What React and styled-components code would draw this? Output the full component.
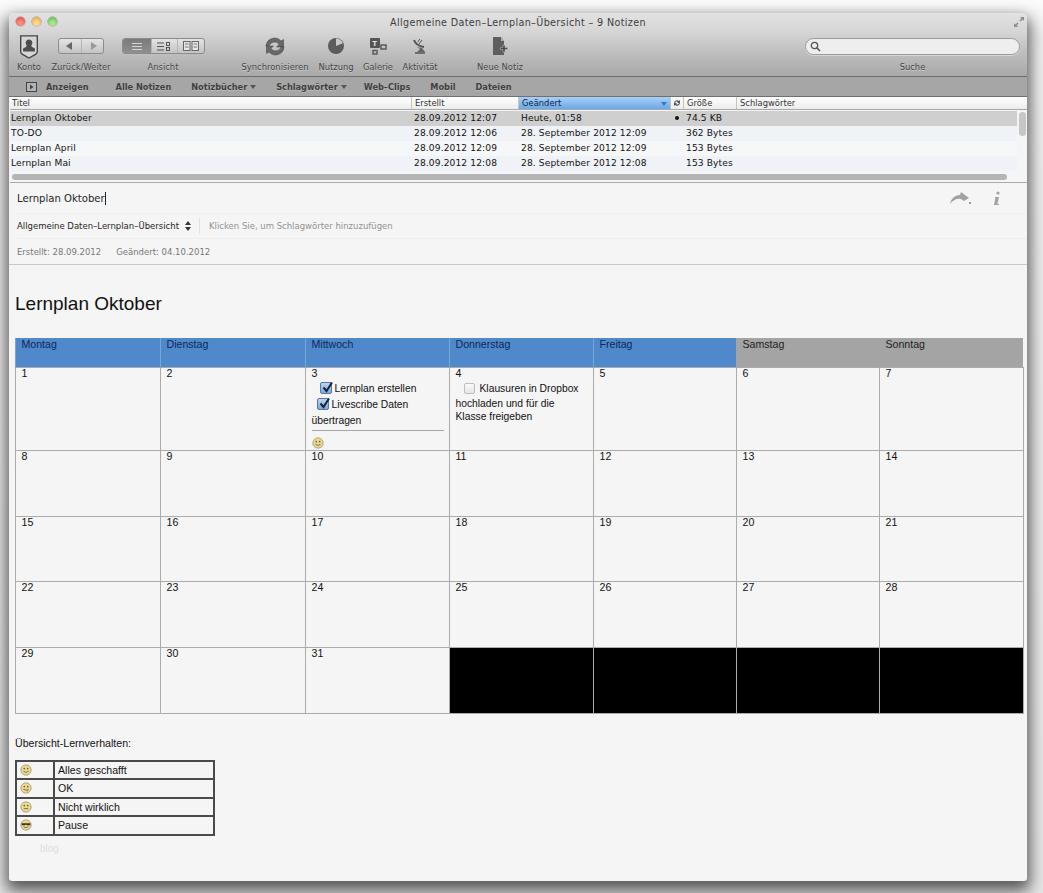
import React from "react";
import styled, { createGlobalStyle } from "styled-components";

const Global = createGlobalStyle`
  html, body { margin: 0; padding: 0; background: #f4f4f4; }
  body { font-family: "DejaVu Sans", sans-serif; overflow: hidden; }
  * { box-sizing: border-box; }
`;

const Page = styled.div`
  width: 1043px;
  height: 893px;
  padding: 13px 16px 12px 9px;
  background: linear-gradient(#fbfbfb 0, #eeeeee 40px, #e6e6e6 100%);
`;
const Win = styled.div`
  width: 1018px;
  height: 868px;
  background: #f5f5f5;
  border-radius: 5px 5px 3px 3px;
  box-shadow: 0 7px 15px 3px rgba(0, 0, 0, 0.62);
  display: flex;
  flex-direction: column;
  overflow: hidden;
`;
const Chrome = styled.div`
  height: 64px;
  flex: none;
  background: linear-gradient(#e2e2e2 0, #d6d6d6 18px, #b4b4b4 50px, #a9a9a9 100%);
  border-bottom: 1px solid #6d6d6d;
  position: relative;
`;
const TitleBar = styled.div`
  height: 17px;
  display: flex;
  align-items: center;
  justify-content: center;
  font-size: 9.6px;
  letter-spacing: 0.35px;
  color: #3e3e3e;
  padding-top: 2px;
`;
const Lights = styled.div`
  position: absolute;
  left: 7px;
  top: 4px;
  display: flex;
  gap: 7px;
`;
const Light = styled.span`
  width: 9px;
  height: 9px;
  border-radius: 50%;
  background: radial-gradient(circle at 50% 70%, ${(p) => p.$a} 20%, ${(p) => p.$b} 100%);
  box-shadow: 0 0 0 0.5px rgba(0, 0, 0, 0.35);
`;
const Resize = styled.svg`
  position: absolute;
  right: 2px;
  top: 3px;
`;
const Toolbar = styled.div`
  display: flex;
  align-items: flex-start;
  margin-top: 2px;
  padding-left: 2px;
  height: 44px;
`;
const Tool = styled.div`
  width: ${(p) => p.$w}px;
  margin-left: ${(p) => p.$ml || 0}px;
  flex: none;
  height: 44px;
  display: flex;
  flex-direction: column;
  align-items: center;
  white-space: nowrap;
`;
const ToolIcon = styled.div`
  height: 28px;
  display: flex;
  align-items: center;
  justify-content: center;
`;
const ToolLabel = styled.div`
  font-size: 8.4px;
  line-height: 12px;
  padding-top: 1px;
  color: #444;
  text-shadow: 0 1px 0 rgba(255, 255, 255, 0.35);
`;
const Segments = styled.div`
  display: flex;
  height: 16px;
  border-radius: 3px;
  border: 1px solid #8c8c8c;
  overflow: hidden;
  background: linear-gradient(#e4e4e4, #c4c4c4);
`;
const Seg = styled.div`
  width: ${(p) => p.$w}px;
  display: flex;
  align-items: center;
  justify-content: center;
  background: ${(p) => (p.$on ? "linear-gradient(#7a7a7a,#8f8f8f)" : "transparent")};
  border-left: ${(p) => (p.$first ? "0" : "1px solid #b4b4b4")};
`;
const Search = styled.div`
  height: 17px;
  width: 215px;
  border-radius: 9px;
  background: #eeeeee;
  border: 1px solid #9a9a9a;
  box-shadow: 0 1px 0 rgba(255, 255, 255, 0.4);
  display: flex;
  align-items: center;
  padding-left: 4px;
`;
const Filter = styled.div`
  height: 20px;
  flex: none;
  background: #a6a6a6;
  border-bottom: 1px solid #707070;
  display: flex;
  align-items: center;
  font-size: 8.2px;
  font-weight: 700;
  color: #3f3f3f;
  text-shadow: 0 1px 0 rgba(255, 255, 255, 0.25);
`;
const FilterItem = styled.span`
  margin-left: ${(p) => p.$ml}px;
  white-space: nowrap;
  display: inline-flex;
  align-items: center;
  gap: 3px;
`;
const Caret = styled.i`
  width: 0;
  height: 0;
  border-left: 3px solid transparent;
  border-right: 3px solid transparent;
  border-top: 4px solid #555;
`;
const Grid = `
  display: grid;
  grid-template-columns: 401px 107px 152px 13px 53px 1fr;
`;
const Head = styled.div`
  ${Grid}
  height: 13px;
  flex: none;
  margin-left: 1px;
  background: linear-gradient(#ffffff, #ececec);
  border-bottom: 1px solid #a8a8a8;
  font-size: 8.4px;
  line-height: 12px;
  color: #333;
`;
const HeadCell = styled.div`
  padding-left: ${(p) => (p.$first ? 2 : 3)}px;
  border-left: ${(p) => (p.$first ? "0" : "1px solid #c4c4c4")};
  background: ${(p) => (p.$on ? "linear-gradient(#a9d0f5,#6aa8ea)" : "transparent")};
  color: ${(p) => (p.$on ? "#10233f" : "#333")};
  position: relative;
  white-space: nowrap;
`;
const SortMark = styled.i`
  position: absolute;
  right: 3px;
  top: 5px;
  border-left: 3px solid transparent;
  border-right: 3px solid transparent;
  border-top: 4px solid #3f78c0;
`;
const SyncMark = styled.div`
  display: flex;
  align-items: center;
  justify-content: center;
  height: 12px;
  border-left: 1px solid #c4c4c4;
`;
const ListArea = styled.div`
  height: 73px;
  flex: none;
  position: relative;
  border-bottom: 1px solid #a9a9a9;
  margin-left: 1px;
  padding: 1px 10px 0 0;
  background: #f3f5f7;
`;
const Row = styled.div`
  ${Grid}
  height: 15px;
  font-size: 9.1px;
  line-height: 14px;
  letter-spacing: 0.12px;
  color: #111;
  background: ${(p) => (p.$sel ? "#cfcfcf" : p.$alt ? "#f6f7f8" : "#eff3f7")};
`;
const Cell = styled.div`
  padding-left: ${(p) => p.$pl ?? 3}px;
  white-space: nowrap;
`;
const Dot = styled.span`
  display: block;
  width: 4px;
  height: 4px;
  margin: 5px 0 0 5px;
  border-radius: 50%;
  background: #111;
`;
const Thumb = styled.div`
  position: absolute;
  right: 1px;
  top: 2px;
  width: 7px;
  height: 24px;
  border-radius: 4px;
  background: #c6c6c6;
`;
const HBar = styled.div`
  position: absolute;
  left: 2px;
  top: 64px;
  width: 995px;
  height: 6px;
  border-radius: 3px;
  background: #b4b4b4;
`;
const Meta = styled.div`
  flex: none;
  height: 82px;
  border-bottom: 1px solid #c8c8c8;
  padding-left: 8px;
`;
const NoteTitleRow = styled.div`
  height: 31px;
  display: flex;
  align-items: center;
  justify-content: space-between;
  border-bottom: 1px solid #efefef;
  padding-right: 26px;
  font-size: 10.1px;
  color: #262626;
`;
const Cursor = styled.span`
  display: inline-block;
  width: 1px;
  height: 13px;
  background: #222;
  vertical-align: -3px;
`;
const Actions = styled.div`
  display: flex;
  align-items: center;
  gap: 21px;
`;
const NoteBookRow = styled.div`
  height: 25px;
  display: flex;
  align-items: center;
  border-bottom: 1px solid #eeeeee;
  font-size: 8.5px;
`;
const Notebook = styled.span`
  color: #262626;
  display: inline-flex;
  align-items: center;
  gap: 6px;
  padding-right: 8px;
  border-right: 1px solid #e2e2e2;
  height: 16px;
  white-space: nowrap;
`;
const Tags = styled.span`
  color: #929292;
  padding-left: 9px;
  white-space: nowrap;
`;
const Dates = styled.div`
  height: 25px;
  display: flex;
  align-items: center;
  gap: 15px;
  font-size: 8.5px;
  color: #787878;
`;
const Body = styled.div`
  flex: 1;
  padding: 0 4px 0 6px;
  font-family: "Liberation Sans", Arial, sans-serif;
  color: #111;
  min-height: 0;
`;
const H1 = styled.h1`
  margin: 27px 0 0 0;
  font-size: 19px;
  line-height: 24px;
  font-weight: 400;
  height: 46px;
`;
const Cal = styled.table`
  width: 1008px;
  margin-left: -0.5px;
  table-layout: fixed;
  border-collapse: collapse;
  font-size: 10.6px;
  line-height: 13px;
`;
const Th = styled.th`
  height: 29px;
  padding: 0 5px 0 6px;
  vertical-align: top;
  text-align: left;
  font-weight: 400;
  background: ${(p) => (p.$end ? "#a4a4a4" : "#5088cc")};
  color: ${(p) => (p.$end ? "#222" : "#0c2a58")};
  border-left: 1px solid ${(p) => (p.$end ? "#a4a4a4" : "#7ba4d8")};
`;
const Td = styled.td`
  height: ${(p) => p.$h}px;
  padding: 0 5px 0 6px;
  vertical-align: top;
  border: 1px solid #ababab;
  background: ${(p) => (p.$black ? "#000" : "#f5f5f5")};
`;
const Day = styled.div`
  line-height: 11px;
  margin-bottom: 2px;
`;
const Task = styled.div`
  padding-left: ${(p) => p.$pl}px;
  min-height: 16px;
  line-height: 16px;
  font-size: 10.3px;
  white-space: nowrap;
`;
const Plain = styled.div`
  font-size: 10.3px;
  line-height: 13px;
`;
const Box = styled.span`
  display: inline-block;
  width: ${(p) => (p.$on ? 12 : 11)}px;
  height: ${(p) => (p.$on ? 12 : 11)}px;
  border-radius: 2px;
  margin-right: ${(p) => (p.$on ? 3 : 5)}px;
  vertical-align: -2px;
  border: 1px solid ${(p) => (p.$on ? "#5678a8" : "#bdbdbd")};
  background: ${(p) => (p.$on ? "linear-gradient(#bcd4ee,#7ea8d8)" : "linear-gradient(#fafafa,#e6e6e6)")};
  position: relative;
`;
const Tick = styled.svg`
  position: absolute;
  left: 0;
  top: -2px;
`;
const Rule = styled.hr`
  border: 0;
  border-top: 1px solid #a8a8a8;
  margin: 1px 0 6px 0;
`;
const Note = styled.div`
  margin-top: 22px;
  font-size: 10.6px;
  line-height: 15px;
  height: 24px;
`;
const Legend = styled.table`
  width: 200px;
  table-layout: fixed;
  border-collapse: collapse;
  font-size: 10.6px;
`;
const LegendCell = styled.td`
  height: 18.5px;
  padding: 0 3px;
  border: 2px solid #4a4a4a;
  line-height: 14px;
`;
const Faint = styled.div`
  margin: 7px 0 0 25px;
  font-size: 10px;
  color: #dddddd;
`;

const S = ({ size = 12, mouth = "smile", glasses }) => (
  <svg width={size} height={size} viewBox="0 0 14 14" style={{ display: "block" }}>
    <circle cx="7" cy="7" r="6" fill="#ecd98f" stroke="#a89a6a" strokeWidth="1" />
    {glasses ? (
      <path d="M2 5h10v2.4H8L7 6.4 6 7.4H2z" fill="#333" />
    ) : (
      <>
        <circle cx="5" cy="5.4" r="0.9" fill="#555" />
        <circle cx="9" cy="5.4" r="0.9" fill="#555" />
      </>
    )}
    {mouth === "smile" && <path d="M4 8.5q3 2.6 6 0" fill="none" stroke="#555" strokeWidth="0.9" />}
    {mouth === "tongue" && (
      <>
        <path d="M4 8.5q3 2 6 0" fill="none" stroke="#555" strokeWidth="0.9" />
        <circle cx="8.6" cy="10" r="1.2" fill="#cf7a6a" />
      </>
    )}
    {mouth === "flat" && <path d="M4.2 9.2q2.8-1 5.6 0" fill="none" stroke="#555" strokeWidth="0.9" />}
    {glasses && <path d="M4 9q3 2.4 6 0" fill="none" stroke="#555" strokeWidth="0.9" />}
  </svg>
);

const Check = ({ on }) => (
  <Box $on={on}>
    {on && (
      <Tick width="13" height="13" viewBox="0 0 13 13">
        <path d="M2.5 6.5l3 3.5L11 1.5" fill="none" stroke="#12233f" strokeWidth="2" />
      </Tick>
    )}
  </Box>
);

const Konto = () => (
  <svg width="20" height="25" viewBox="0 0 20 27">
    <path d="M1 2h18v17q0 2-2 3l-7 4-7-4q-2-1-2-3z" fill="#d6d6d6" stroke="#444" strokeWidth="1.5" />
    <path d="M10 6a3.4 3.4 0 0 1 3 5.4c-.5 1-.6 2 .4 2.6l3 1.6V19H3.6v-3.4l3-1.6c1-.6.9-1.6.4-2.6A3.4 3.4 0 0 1 10 6z" fill="#4d4d4d" />
  </svg>
);
const SyncIcon = () => (
  <svg width="22" height="19" viewBox="0 0 22 19">
    <path d="M2 9a8.6 8.6 0 0 1 15-5l2.5-1.5L19.6 10H12.5l2.6-2.6A5.6 5.6 0 0 0 5 9.6z" fill="#686868" stroke="#3e3e3e" strokeWidth=".5" />
    <path d="M20 10a8.6 8.6 0 0 1-15 5l-2.5 1.5L2.4 9h7.1l-2.6 2.6A5.6 5.6 0 0 0 17 9.4z" fill="#686868" stroke="#3e3e3e" strokeWidth=".5" />
  </svg>
);
const Usage = () => (
  <svg width="18" height="18" viewBox="0 0 18 18">
    <circle cx="9" cy="9" r="8" fill="#5c5c5c" />
    <path d="M9 9V1.6a7.4 7.4 0 0 1 6.8 4.6z" fill="#c8c8c8" />
  </svg>
);
const Gallery = () => (
  <svg width="18" height="18" viewBox="0 0 18 18">
    <rect x="1" y="1" width="10" height="10" rx="1" fill="#555" />
    <text x="3.2" y="9" fontSize="8" fontWeight="700" fill="#eee" fontFamily="Liberation Sans">T</text>
    <rect x="12" y="8" width="5" height="4" fill="none" stroke="#555" strokeWidth="1.4" />
    <rect x="4" y="13.5" width="4" height="3.5" fill="none" stroke="#555" strokeWidth="1.4" />
  </svg>
);
const Sat = () => (
  <svg width="16" height="18" viewBox="0 0 16 18">
    <path d="M2 3q2 6 10 7" fill="none" stroke="#555" strokeWidth="2" />
    <path d="M8 2l-2.4 3M10 3L7 7" stroke="#555" strokeWidth="1" />
    <path d="M5 10l3 2-3 3h8l-3-4" fill="#666" />
    <path d="M3 16h10" stroke="#555" strokeWidth="1.5" />
  </svg>
);
const NewNote = () => (
  <svg width="16" height="20" viewBox="0 0 16 20">
    <path d="M1 1h8l3 4v14H1z" fill="#5f5f5f" />
    <path d="M9 1v4h3z" fill="#b0b0b0" />
    <path d="M11 9h2v2.6h2.6v2H13v2.6h-2v-2.6H8.4v-2H11z" fill="#474747" stroke="#c8c8c8" strokeWidth=".5" />
  </svg>
);
const Lines = () => (
  <svg width="12" height="9" viewBox="0 0 12 9">
    <path d="M1 1.5h10M1 4.5h10M1 7.5h10" stroke="#d6d6d6" strokeWidth="1" />
  </svg>
);
const Split = () => (
  <svg width="14" height="9" viewBox="0 0 14 9">
    <path d="M0 1h7M0 4.5h7M0 8h7" stroke="#555" strokeWidth="1" />
    <rect x="9.5" y=".5" width="3" height="3" fill="none" stroke="#555" />
    <rect x="9.5" y="5.5" width="3" height="3" fill="none" stroke="#555" />
  </svg>
);
const Cards = () => (
  <svg width="16" height="10" viewBox="0 0 16 10">
    <rect x=".5" y=".5" width="6.5" height="9" fill="#e6e6e6" stroke="#666" />
    <rect x="9" y=".5" width="6.5" height="9" fill="#e6e6e6" stroke="#666" />
    <path d="M2 3h3.5M2 6h3.5M10.5 3H14M10.5 6H14" stroke="#777" />
  </svg>
);

const rows = [
  ["Lernplan Oktober", "28.09.2012 12:07", "Heute, 01:58", true, "74.5 KB"],
  ["TO-DO", "28.09.2012 12:06", "28. September 2012 12:09", false, "362 Bytes"],
  ["Lernplan April", "28.09.2012 12:09", "28. September 2012 12:09", false, "153 Bytes"],
  ["Lernplan Mai", "28.09.2012 12:08", "28. September 2012 12:08", false, "153 Bytes"],
];
const days = ["Montag", "Dienstag", "Mittwoch", "Donnerstag", "Freitag", "Samstag", "Sonntag"];
const colWidths = [145, 145, 144, 144, 143, 143, 144];
const weeks = [
  { h: 66, d: [8, 9, 10, 11, 12, 13, 14] },
  { h: 65, d: [15, 16, 17, 18, 19, 20, 21] },
  { h: 66, d: [22, 23, 24, 25, 26, 27, 28] },
];
const legend = [
  ["smile", false, "Alles geschafft"],
  ["tongue", false, "OK"],
  ["flat", false, "Nicht wirklich"],
  ["none", true, "Pause"],
];

export default function App() {
  return (
    <Page>
      <Global />
      <Win>
        <Chrome>
          <Lights>
            <Light $a="#ff8a7a" $b="#d8443c" />
            <Light $a="#ffd88a" $b="#dca030" />
            <Light $a="#a8e88a" $b="#58b048" />
          </Lights>
          <TitleBar>Allgemeine Daten–Lernplan–Übersicht – 9 Notizen</TitleBar>
          <Resize width="12" height="12" viewBox="0 0 12 12">
            <path d="M7 1h4v4L9.6 3.6 7.6 5.6 6.4 4.4l2-2zM5 11H1V7l1.4 1.4 2-2 1.2 1.2-2 2z" fill="#8e8e8e" />
          </Resize>
          <Toolbar>
            <Tool $w={36}><ToolIcon><Konto /></ToolIcon><ToolLabel>Konto</ToolLabel></Tool>
            <Tool $w={62} $ml={3}>
              <ToolIcon>
                <Segments>
                  <Seg $w={22} $first>
                    <svg width="8" height="8" viewBox="0 0 8 8"><path d="M6 0v8L0 4z" fill="#666" /></svg>
                  </Seg>
                  <Seg $w={22}>
                    <svg width="8" height="8" viewBox="0 0 8 8"><path d="M2 0v8l6-4z" fill="#999" /></svg>
                  </Seg>
                </Segments>
              </ToolIcon>
              <ToolLabel>Zurück/Weiter</ToolLabel>
            </Tool>
            <Tool $w={86} $ml={8}>
              <ToolIcon>
                <Segments>
                  <Seg $w={28} $on $first><Lines /></Seg>
                  <Seg $w={26}><Split /></Seg>
                  <Seg $w={27}><Cards /></Seg>
                </Segments>
              </ToolIcon>
              <ToolLabel>Ansicht</ToolLabel>
            </Tool>
            <Tool $w={70} $ml={34}><ToolIcon><SyncIcon /></ToolIcon><ToolLabel>Synchronisieren</ToolLabel></Tool>
            <Tool $w={38} $ml={7}><ToolIcon><Usage /></ToolIcon><ToolLabel>Nutzung</ToolLabel></Tool>
            <Tool $w={32} $ml={7}><ToolIcon><Gallery /></ToolIcon><ToolLabel>Galerie</ToolLabel></Tool>
            <Tool $w={36} $ml={8}><ToolIcon><Sat /></ToolIcon><ToolLabel>Aktivität</ToolLabel></Tool>
            <Tool $w={50} $ml={37}><ToolIcon><NewNote /></ToolIcon><ToolLabel>Neue Notiz</ToolLabel></Tool>
            <Tool $w={215} $ml={280}>
              <ToolIcon>
                <Search>
                  <svg width="11" height="11" viewBox="0 0 11 11">
                    <circle cx="4.5" cy="4.5" r="3.2" fill="none" stroke="#555" strokeWidth="1.3" />
                    <path d="M7 7l3 3" stroke="#555" strokeWidth="1.6" />
                  </svg>
                </Search>
              </ToolIcon>
              <ToolLabel>Suche</ToolLabel>
            </Tool>
          </Toolbar>
        </Chrome>
        <Filter>
          <FilterItem $ml={17}>
            <svg width="11" height="10" viewBox="0 0 11 10" style={{ marginRight: 6 }}>
              <rect x=".5" y=".5" width="10" height="9" fill="#b4b4b4" stroke="#444" />
              <path d="M4 2.6v4.8L7.6 5z" fill="#444" />
            </svg>
            Anzeigen
          </FilterItem>
          <FilterItem $ml={27}>Alle Notizen</FilterItem>
          <FilterItem $ml={20}>Notizbücher <Caret /></FilterItem>
          <FilterItem $ml={20}>Schlagwörter <Caret /></FilterItem>
          <FilterItem $ml={17}>Web–Clips</FilterItem>
          <FilterItem $ml={20}>Mobil</FilterItem>
          <FilterItem $ml={20}>Dateien</FilterItem>
        </Filter>
        <Head>
          <HeadCell $first>Titel</HeadCell>
          <HeadCell>Erstellt</HeadCell>
          <HeadCell $on>Geändert<SortMark /></HeadCell>
          <SyncMark>
            <svg width="8" height="8" viewBox="0 0 8 8">
              <path d="M1 4a3 3 0 0 1 5-2l1-1v3H4l1-1a1.8 1.8 0 0 0-3 1zM7 4a3 3 0 0 1-5 2L1 7V4h3L3 5a1.8 1.8 0 0 0 3-1z" fill="#555" />
            </svg>
          </SyncMark>
          <HeadCell>Größe</HeadCell>
          <HeadCell>Schlagwörter</HeadCell>
        </Head>
        <ListArea>
          {rows.map((r, i) => (
            <Row key={r[0]} $sel={i === 0} $alt={i % 2 === 0}>
              <Cell $pl={1}>{r[0]}</Cell>
              <Cell>{r[1]}</Cell>
              <Cell>{r[2]}</Cell>
              <Cell $pl={0}>{r[3] && <Dot />}</Cell>
              <Cell>{r[4]}</Cell>
              <Cell />
            </Row>
          ))}
          <Thumb />
          <HBar />
        </ListArea>
        <Meta>
          <NoteTitleRow>
            <span>Lernplan Oktober<Cursor /></span>
            <Actions>
              <svg width="23" height="14" viewBox="0 0 23 14">
                <path d="M1 13C2 7 7 4 11 4l1-3 8 6-5 3-3-2C8 7 4 9 1 13z" fill="#a2a2a2" />
                <circle cx="21" cy="12" r="1.1" fill="#888" />
              </svg>
              <svg width="8" height="15" viewBox="0 0 8 15">
                <circle cx="5" cy="2" r="1.6" fill="#a2a2a2" />
                <path d="M2 6h4l-1.6 7H6v1H1l1.4-7H2z" fill="#a2a2a2" />
              </svg>
            </Actions>
          </NoteTitleRow>
          <NoteBookRow>
            <Notebook>
              Allgemeine Daten–Lernplan–Übersicht
              <svg width="6" height="10" viewBox="0 0 6 10">
                <path d="M3 0l3 4H0zM3 10L0 6h6z" fill="#333" />
              </svg>
            </Notebook>
            <Tags>Klicken Sie, um Schlagwörter hinzuzufügen</Tags>
          </NoteBookRow>
          <Dates>
            <span>Erstellt: 28.09.2012</span>
            <span>Geändert: 04.10.2012</span>
          </Dates>
        </Meta>
        <Body>
          <H1>Lernplan Oktober</H1>
          <Cal>
            <colgroup>
              {colWidths.map((w, i) => (
                <col key={i} style={{ width: w }} />
              ))}
            </colgroup>
            <thead>
              <tr>
                {days.map((d, i) => (
                  <Th key={d} $end={i > 4}>{d}</Th>
                ))}
              </tr>
            </thead>
            <tbody>
              <tr>
                <Td $h={83}><Day>1</Day></Td>
                <Td $h={83}><Day>2</Day></Td>
                <Td $h={83}>
                  <Day>3</Day>
                  <Task $pl={8}><Check on />Lernplan erstellen</Task>
                  <Task $pl={5}><Check on />Livescribe Daten</Task>
                  <Task $pl={0}>übertragen</Task>
                  <Rule />
                  <S />
                </Td>
                <Td $h={83}>
                  <Day>4</Day>
                  <Task $pl={8}><Check />Klausuren in Dropbox</Task>
                  <Plain>
                    hochladen und für die
                    <br />
                    Klasse freigeben
                  </Plain>
                </Td>
                <Td $h={83}><Day>5</Day></Td>
                <Td $h={83}><Day>6</Day></Td>
                <Td $h={83}><Day>7</Day></Td>
              </tr>
              {weeks.map((w) => (
                <tr key={w.d[0]}>
                  {w.d.map((n) => (
                    <Td key={n} $h={w.h}><Day>{n}</Day></Td>
                  ))}
                </tr>
              ))}
              <tr>
                <Td $h={66}><Day>29</Day></Td>
                <Td $h={66}><Day>30</Day></Td>
                <Td $h={66}><Day>31</Day></Td>
                <Td $h={66} $black />
                <Td $h={66} $black />
                <Td $h={66} $black />
                <Td $h={66} $black />
              </tr>
            </tbody>
          </Cal>
          <Note>Übersicht-Lernverhalten:</Note>
          <Legend>
            <colgroup>
              <col style={{ width: 38 }} />
              <col />
            </colgroup>
            <tbody>
              {legend.map(([m, g, t]) => (
                <tr key={t}>
                  <LegendCell><S mouth={m} glasses={g} /></LegendCell>
                  <LegendCell>{t}</LegendCell>
                </tr>
              ))}
            </tbody>
          </Legend>
          <Faint>blog</Faint>
        </Body>
      </Win>
    </Page>
  );
}
